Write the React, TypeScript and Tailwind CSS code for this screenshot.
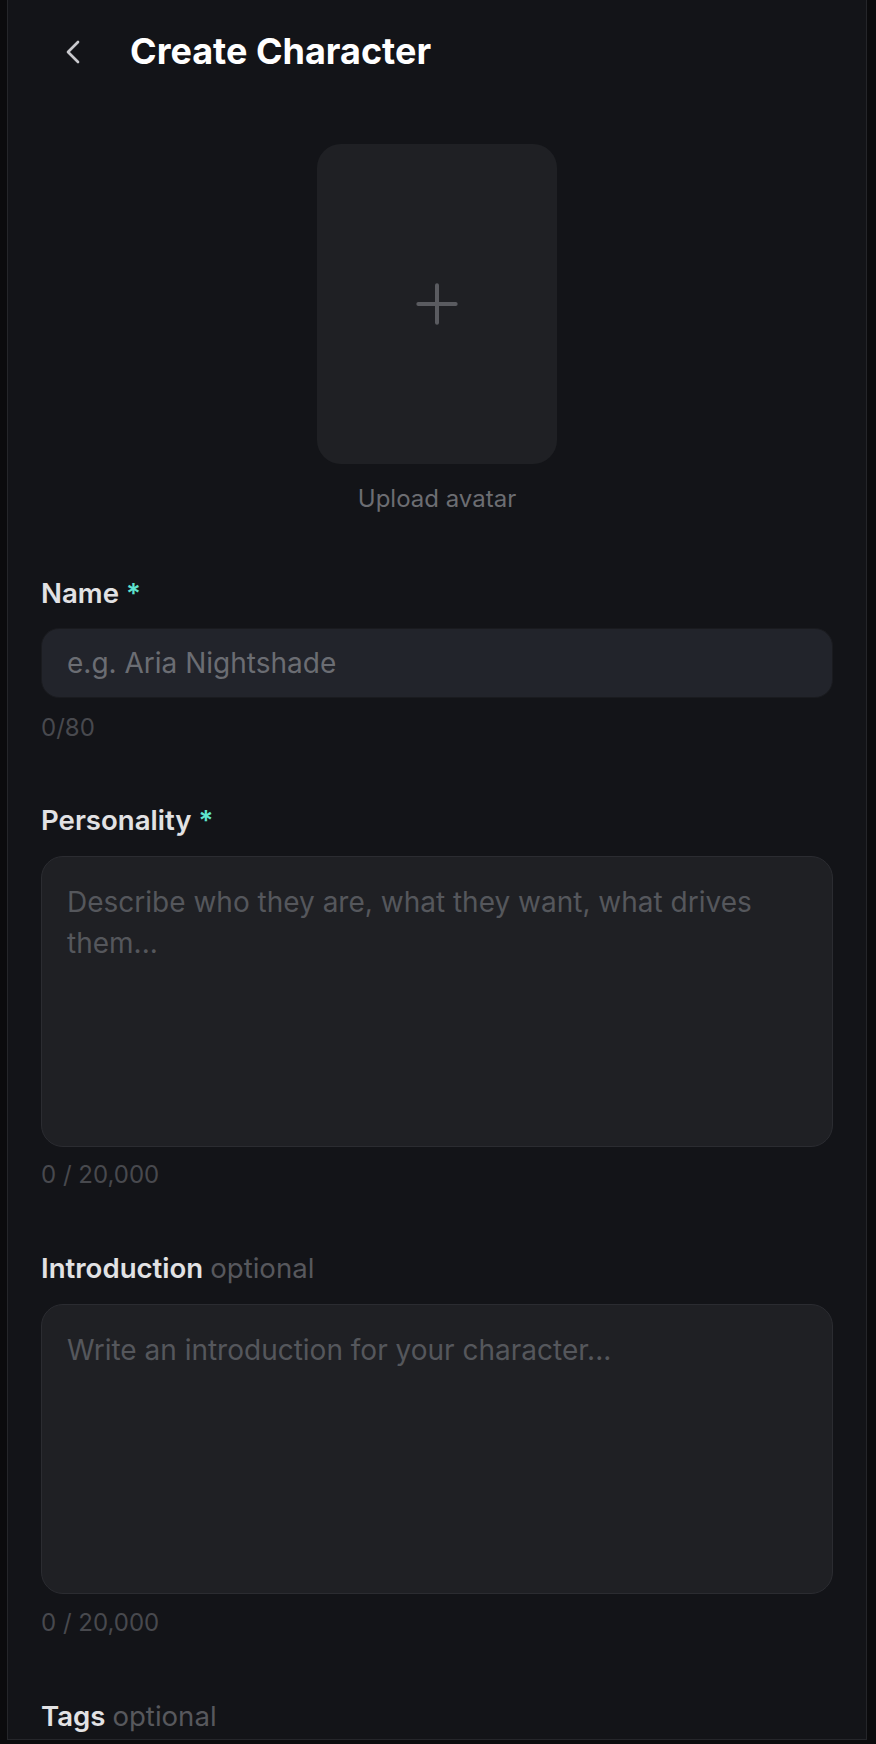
import { ChevronLeft, Plus } from 'lucide-react'

interface FieldLabelProps {
  label: string
  required?: boolean
}

const FieldLabel = ({ label, required }: FieldLabelProps) => (
  <label className="block text-[27.6px] leading-[36px] font-semibold text-[#e2e2e4]">
    {label}{' '}
    {required ? (
      <span className="text-[#5fe3cf]">*</span>
    ) : (
      <span className="font-normal text-[#57585d]">optional</span>
    )}
  </label>
)

const Counter = ({ text, className }: { text: string; className?: string }) => (
  <p className={`text-[24px] leading-[32px] text-[#48494e] ${className ?? ''}`}>
    {text}
  </p>
)

export default function App() {
  return (
    <div className="min-h-screen bg-[#0b0b0d] font-['Inter','Noto_Sans',sans-serif]">
      <div className="ml-[7px] w-[860px] h-[1740px] overflow-hidden border-x border-b border-[#25262a] bg-[#131418]">
        {/* header */}
        <div className="flex items-center h-[103px] pl-[45px]">
          <button className="text-[#c9c9cd]">
            <ChevronLeft size={40} strokeWidth={1.6} />
          </button>
          <h1 className="ml-[37px] text-[36px] leading-[41px] font-bold text-white">
            Create Character
          </h1>
        </div>

        {/* avatar */}
        <div className="flex flex-col items-center mt-[41px]">
          <button className="w-[240px] h-[320px] rounded-[24px] bg-[#1f2024] flex items-center justify-center text-[#5a5b60]">
            <Plus size={64} strokeWidth={1.5} />
          </button>
          <p className="mt-[19px] text-[24px] leading-[32px] text-[#6c6d72]">
            Upload avatar
          </p>
        </div>

        {/* form */}
        <div className="px-[33px] mt-[60px]">
          <div>
            <FieldLabel label="Name" required />
            <input
              className="mt-[17px] w-full h-[70px] rounded-[18px] bg-[#22242b] border border-[#1a1b1f] px-[25px] text-[28px] text-white outline-none placeholder:text-[#6b6d73]"
              placeholder="e.g. Aria Nightshade"
            />
            <Counter text="0/80" className="mt-[14px]" />
          </div>

          <div className="mt-[58px]">
            <FieldLabel label="Personality" required />
            <textarea
              className="block mt-[18px] w-full h-[291px] resize-none rounded-[22px] bg-[#1f2024] border border-[#2b2c31] pt-[25px] px-[25px] text-[28px] leading-[40.5px] text-white outline-none placeholder:text-[#55575c]"
              placeholder="Describe who they are, what they want, what drives them..."
            />
            <Counter text="0 / 20,000" className="mt-[12px]" />
          </div>

          <div className="mt-[59px]">
            <FieldLabel label="Introduction" />
            <textarea
              className="block mt-[18px] w-full h-[290px] resize-none rounded-[22px] bg-[#1f2024] border border-[#2b2c31] pt-[25px] px-[25px] text-[28px] leading-[40.5px] text-white outline-none placeholder:text-[#55575c]"
              placeholder="Write an introduction for your character..."
            />
            <Counter text="0 / 20,000" className="mt-[13px]" />
          </div>

          <div className="mt-[59px]">
            <FieldLabel label="Tags" />
          </div>
        </div>
      </div>
    </div>
  )
}
